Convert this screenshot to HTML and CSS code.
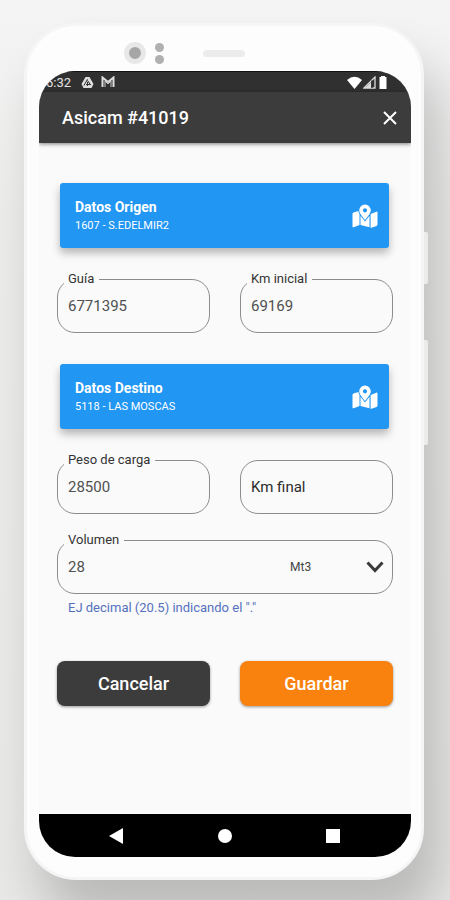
FILE: index.html
```html
<!DOCTYPE html>
<html lang="es">
<head>
<meta charset="utf-8">
<meta name="viewport" content="width=device-width, initial-scale=1">
<title>Asicam #41019</title>
<link rel="stylesheet" href="styles.css">
</head>
<body>
<svg class="defs" aria-hidden="true">
  <symbol id="map" viewBox="0 0 26 24">
    <path fill-rule="evenodd" d="M13 0.500a5.800 5.800 0 0 1 5.800 5.800c0 3-3.800 7.200-5.800 9.700-2-2.500-5.800-6.700-5.800-9.700A5.800 5.800 0 0 1 13 0.500zm0 3.700a2.100 2.100 0 1 0 0 4.200 2.100 2.100 0 0 0 0-4.200z"/>
    <path d="M0.500 10q0-1 1-1.400L6.300 7q.3 1.500 1.200 3v11L1.700 23.200q-1.200.4-1.200-.8zM8.500 11.700l4.500 5.800 4.500-5.800V23.200l-9-2.200zM18.600 10l5.700-2.300q1.200-.4 1.200.8v12q0 1-1 1.400l-5.900 2z"/>
  </symbol>
</svg>
<div class="phone">
  <div class="bezel">
    <span class="camera"></span>
    <span class="sensors"><i></i><i></i></span>
    <span class="speaker"></span>
  </div>
  <div class="screen">
    <div class="status">
      <span class="time">6:32</span>
      <svg width="13" height="13" viewBox="0 0 13 13"><path d="M4.500 1h4l4 7-2 4h-8l-2-4z" fill="#ddd"/><path d="M6.500 3.200L3 9.500M5 8.500h5M6.500 4.500l3 4.500M6.500 6v4" stroke="#333" fill="none"/></svg>
      <svg width="14" height="12" viewBox="0 0 14 12"><path d="M1.500 11V1.500L7 6l5.500-4.500V11" fill="none" stroke="#ddd" stroke-width="2"/><path d="M4 11V5l3 3 3-3v6" fill="none" stroke="#ccc"/></svg>
      <span class="signals">
        <svg width="15" height="13" viewBox="0 0 15 13"><path d="M0 4Q7.500-2.500 15 4L7.500 13z" fill="#fff"/></svg>
        <svg width="14" height="13" viewBox="0 0 14 13"><path d="M1 12L12 1v11z" fill="none" stroke="#ddd" stroke-width="1.300"/><path d="M2 12l6-6v6z" fill="#ddd"/><path d="M9 4.500V12" stroke="#333" stroke-width="1.500"/></svg>
        <svg width="10" height="13" viewBox="0 0 10 13"><path d="M3 0h4v1h1.500v12h-7V1H3z" fill="#fff"/></svg>
      </span>
    </div>
    <header class="appbar">
      <h1>Asicam #41019</h1>
      <button class="close" type="button" aria-label="Cerrar"><svg width="16" height="16" viewBox="0 0 16 16"><path d="M2 2l12 12m0-12L2 14" stroke="#fff" stroke-width="2"/></svg></button>
    </header>
    <form class="content">
      <button class="card" type="button">
        <span><strong>Datos Origen</strong><small>1607 - S.EDELMIR2</small></span>
        <svg width="26" height="24"><use href="#map"/></svg>
      </button>
      <div class="row">
        <div class="field"><label for="guia">Guía</label><input id="guia" value="6771395"></div>
        <div class="field"><label for="inicial">Km inicial</label><input id="inicial" value="69169"></div>
      </div>
      <button class="card" type="button">
        <span><strong>Datos Destino</strong><small>5118 - LAS MOSCAS</small></span>
        <svg width="26" height="24"><use href="#map"/></svg>
      </button>
      <div class="row">
        <div class="field"><label for="peso">Peso de carga</label><input id="peso" value="28500"></div>
        <div class="field"><input id="final" aria-label="Km final" placeholder="Km final"></div>
      </div>
      <div class="field volume">
        <label for="volumen">Volumen</label><input id="volumen" value="28">
        <select aria-label="Unidad"><option>Mt3</option></select>
        <svg class="chevron" width="18" height="12" viewBox="0 0 18 12"><path d="M1.500 1.500L9 9.500l7.500-8" fill="none" stroke="#3a3a3a" stroke-width="3"/></svg>
      </div>
      <p class="hint">EJ decimal (20.5) indicando el "."</p>
      <div class="row actions">
        <button class="btn" type="button">Cancelar</button>
        <button class="btn save" type="button">Guardar</button>
      </div>
    </form>
    <nav class="nav">
      <button type="button" aria-label="Atrás"><svg width="16" height="16" viewBox="0 0 16 16"><path d="M0 8l14-8v16z" fill="#fff"/></svg></button>
      <button type="button" aria-label="Inicio"><svg width="16" height="16" viewBox="0 0 16 16"><circle cx="8" cy="8" r="7" fill="#fff"/></svg></button>
      <button type="button" aria-label="Recientes"><svg width="16" height="16" viewBox="0 0 16 16"><path d="M1 1h14v14H1z" fill="#fff"/></svg></button>
    </nav>
  </div>
  <div class="side"><i></i><i></i></div>
</div>
</body>
</html>
```
FILE: styles.css
```css
* { box-sizing: border-box; }
body {
  margin: 0;
  min-height: 100vh;
  display: flex;
  padding: 23px 26px 20px 24px;
  overflow-x: hidden;
  font-family: Roboto, sans-serif;
  background: linear-gradient(180deg, #f4f4f4 0, #ececeb 25%, #e8e8e7 100%);
}
button, input, select { font: inherit; border: 0; padding: 0; margin: 0; background: none; }
svg { display: block; flex: none; }
.defs { position: absolute; width: 0; height: 0; }
.phone {
  position: relative;
  flex: 1;
  min-width: 0;
  display: flex;
  flex-direction: column;
  padding: 0 10px 20px 12px;
  border: 3px solid #f5f5f5;
  border-radius: 52px;
  background: #fdfdfd;
  box-shadow: 16px 40px 50px rgba(0, 0, 0, .2);
}
.bezel {
  height: 45px;
  display: flex;
  align-items: center;
  padding: 15px 0 0 85px;
}
.camera { width: 22px; height: 22px; border: 5px solid #e8e8e8; border-radius: 50%; background: #a6a6a6; }
.sensors { display: grid; gap: 3px; margin-left: 9px; }
.sensors i { width: 9px; height: 9px; border-radius: 50%; background: #b0b0b0; }
.speaker { width: 42px; height: 7px; margin-left: 39px; border-radius: 4px; background: #ececec; }
.bezel { padding-top: 9px; }
.screen {
  flex: 1;
  display: flex;
  flex-direction: column;
  overflow: hidden;
  border-radius: 36px;
  background: #fafafa;
}
.status {
  height: 21px;
  display: flex;
  align-items: center;
  padding: 0 23px 0 7px;
  border-top: 1px solid #111;
  background: #303030;
  color: #e4e4e4;
  font-size: 13px;
}
.time { margin-right: 10px; }
.status > svg + svg { margin-left: 7px; }
.signals { display: flex; gap: 1px; margin-left: auto; }
.appbar {
  height: 51px;
  display: flex;
  align-items: center;
  justify-content: space-between;
  padding: 0 13px 0 23px;
  background: #3c3c3c;
  color: #fff;
  box-shadow: 0 1px 4px rgba(0, 0, 0, .5);
}
h1 { margin: 0; font-size: 18px; font-weight: 500; }
.content { flex: 1; padding: 40px 18px; }
.card {
  width: calc(100% - 7px);
  height: 65px;
  margin: 0 4px 0 3px;
  display: flex;
  align-items: center;
  justify-content: space-between;
  padding: 0 11px 0 15px;
  border-radius: 3px;
  background: #2196f3;
  color: #fff;
  fill: #fff;
  text-align: left;
  box-shadow: 0 5px 8px rgba(0, 0, 0, .28);
}
.card strong { display: block; font-size: 14px; font-weight: 700; line-height: 20px; }
.card small { display: block; font-size: 11px; line-height: 17px; }
.row { display: grid; grid-template-columns: 1fr 1fr; gap: 30px; }
.card + .row { margin: 31px 0; }
.field {
  position: relative;
  height: 54px;
  display: flex;
  align-items: center;
  padding: 0 10px;
  border: 1px solid #8c8c8c;
  border-radius: 18px;
}
.field label {
  position: absolute;
  top: -9px;
  left: 6px;
  padding: 0 5px 0 4px;
  background: #fafafa;
  color: #333;
  font-size: 13px;
  line-height: 16px;
}
.field input { width: 100%; min-width: 0; color: #505050; font-size: 15px; }
.field input::placeholder { color: #2b2b2b; opacity: 1; }
.content .row:has(+ .volume) { margin-bottom: 26px; }
.volume input { flex: 1; }
.volume select {
  appearance: none;
  width: 92px;
  height: 40px;
  color: #444;
  font-size: 12px;
}
.chevron { position: absolute; right: 8px; pointer-events: none; }
.hint { margin: 6px 11px 0; color: #5571be; font-size: 13px; line-height: 16px; }
.actions { margin-top: 45px; }
.btn {
  height: 45px;
  border-radius: 8px;
  background: #3c3c3c;
  color: #fff;
  font-size: 18px;
  font-weight: 500;
  box-shadow: 0 1px 3px rgba(0, 0, 0, .4);
}
.save { background: #f9820e; }
.nav {
  height: 43px;
  display: flex;
  align-items: center;
  justify-content: space-between;
  padding: 0 70px;
  background: #000;
}
.side { position: absolute; top: 206px; right: -7px; }
.side i { display: block; width: 4px; height: 52px; border-radius: 0 2px 2px 0; background: #ececec; }
.side i + i { height: 105px; margin-top: 56px; }
```
